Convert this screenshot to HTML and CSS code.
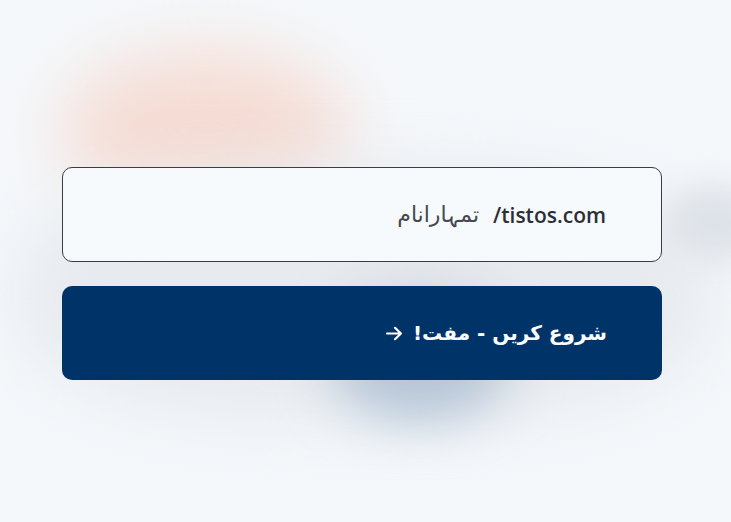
FILE: index.html
```html
<!DOCTYPE html>
<html lang="ur" dir="rtl">
<head>
<meta charset="utf-8">
<link rel="stylesheet" href="styles.css">
</head>
<body>
<div class="bg">
  <div class="blob blob-peach"></div>
  <div class="blob blob-gray"></div>
  <div class="blob blob-blue"></div>
  <div class="blob blob-right"></div>
</div>
<main class="form">
  <label class="field">
    <span class="prefix">tistos.com/</span>
    <span class="placeholder">تمہارانام</span>
  </label>
  <button class="cta"><span>شروع کریں - مفت!</span><svg class="arrow" width="18" height="15" viewBox="0 0 18 15"><path d="M2 7.5h14M10 1.8l6 5.7-6 5.7" fill="none" stroke="#fff" stroke-width="2.2" stroke-linecap="round" stroke-linejoin="round"/></svg></button>
</main>
</body>
</html>
```
FILE: styles.css
```css
html, body {
  margin: 0;
  padding: 0;
  width: 731px;
  height: 522px;
  overflow: hidden;
  background: #f5f8fb;
  font-family: "DejaVu Sans", "Noto Sans", sans-serif;
}
.bg {
  position: absolute;
  inset: 0;
  overflow: hidden;
}
.blob {
  position: absolute;
  border-radius: 50%;
}
.blob-peach {
  left: 60px;
  top: 50px;
  width: 290px;
  height: 160px;
  background: #f5dcd4;
  filter: blur(34px);
}
.blob-gray {
  left: 20px;
  top: 170px;
  width: 690px;
  height: 250px;
  background: #e7eaee;
  filter: blur(32px);
  border-radius: 40%;
}
.blob-blue {
  left: 330px;
  top: 300px;
  width: 180px;
  height: 120px;
  background: #b4c4d6;
  filter: blur(26px);
}
.blob-right {
  left: 665px;
  top: 185px;
  width: 100px;
  height: 75px;
  background: #dde2e8;
  filter: blur(16px);
}
.form {
  position: relative;
  display: flex;
  flex-direction: column;
  gap: 24px;
  margin: 167px 69px 0 62px;
}
.field {
  box-sizing: border-box;
  height: 95px;
  border: 1px solid #3a3d44;
  border-radius: 10px;
  background: #f7fafd;
  display: flex;
  align-items: center;
  gap: 14px;
  padding: 0 55px;
  font-size: 21px;
}
.prefix {
  color: #2c2f36;
  font-weight: 600;
  font-family: "Open Sans", "DejaVu Sans", sans-serif;
}
.placeholder {
  color: #45484f;
  font-family: "DejaVu Sans", sans-serif;
  font-size: 22px;
  font-weight: normal;
}
.cta {
  box-sizing: border-box;
  height: 94px;
  border: none;
  border-radius: 10px;
  background: #003368;
  color: #ffffff;
  display: flex;
  align-items: center;
  gap: 10px;
  padding: 0 55px;
  font-family: "DejaVu Sans", sans-serif;
  font-weight: bold;
  font-size: 20px;
}
.arrow {
  display: block;
}
```
